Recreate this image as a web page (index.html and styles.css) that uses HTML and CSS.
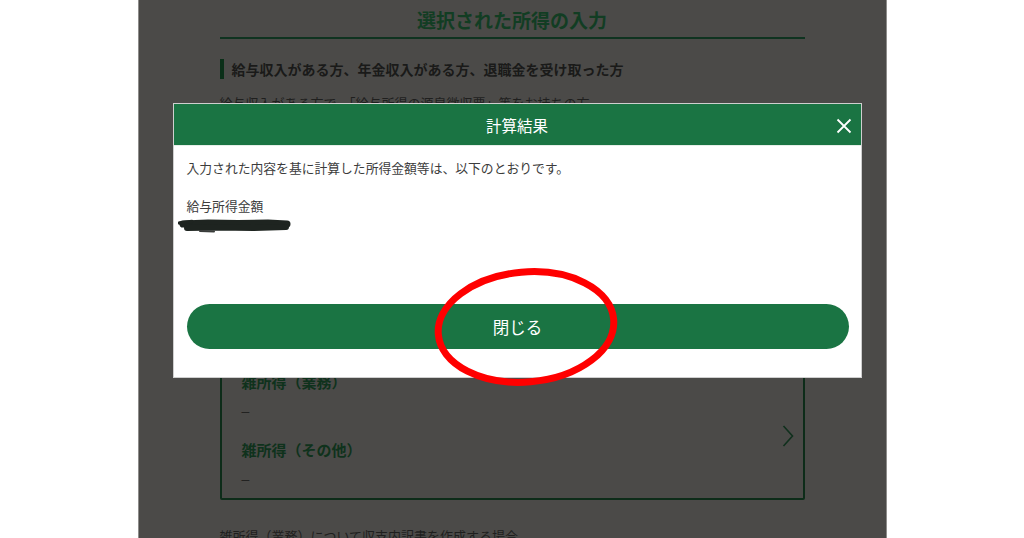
FILE: index.html
```html
<!DOCTYPE html>
<html lang="ja">
<head>
<meta charset="utf-8">
<title>計算結果</title>
<link rel="stylesheet" href="styles.css">
</head>
<body>
<div class="panel">
  <main class="page">
    <h1 class="page-title">選択された所得の入力</h1>
    <h2 class="section-head">給与収入がある方、年金収入がある方、退職金を受け取った方</h2>
    <p class="para">給与収入がある方で、「給与所得の源泉徴収票」等をお持ちの方</p>
    <div class="card">
      <div class="items">
        <div class="item"><div class="label">給与所得</div><div class="dash">–</div></div>
        <div class="item"><div class="label">公的年金等に係る雑所得</div><div class="dash">–</div></div>
        <div class="item"><div class="label">退職所得</div><div class="dash">–</div></div>
      </div>
    </div>
    <div class="card card-link">
      <div class="items">
        <div class="item"><div class="label">雑所得（業務）</div><div class="dash">–</div></div>
        <div class="item"><div class="label">雑所得（その他）</div><div class="dash">–</div></div>
      </div>
      <svg class="chevron" width="12" height="24" viewBox="0 0 12 24"><path d="M1.5 2 L10.5 12 L1.5 22" fill="none" stroke="#10301d" stroke-width="1.6"/></svg>
    </div>
    <p class="para para-bottom">雑所得（業務）について収支内訳書を作成する場合</p>
  </main>

  <div class="modal">
    <div class="modal-head">
      <span class="modal-title">計算結果</span>
      <span class="modal-close" aria-label="閉じる">
        <svg width="16" height="16" viewBox="0 0 16 16"><path d="M1.5 1.5 L14.5 14.5 M14.5 1.5 L1.5 14.5" stroke="#ffffff" stroke-width="1.8" fill="none"/></svg>
      </span>
    </div>
    <div class="modal-body">
      <p class="modal-text">入力された内容を基に計算した所得金額等は、以下のとおりです。</p>
      <p class="modal-label">給与所得金額</p>
      <svg class="scribble" width="116" height="16" viewBox="0 0 116 16">
        <path d="M5 6 L30 5 L60 5.5 L90 5 L109 6" stroke="#1e2420" stroke-width="7" stroke-linecap="round" fill="none"/>
        <path d="M9 10 L40 9.5 L75 10 L108 9" stroke="#1e2420" stroke-width="6" stroke-linecap="round" fill="none"/>
        <path d="M1.5 5 L14 3.5" stroke="#1e2420" stroke-width="3.5" stroke-linecap="round" fill="none"/>
        <path d="M22 13 L36 13.5" stroke="#3a3d3b" stroke-width="2" stroke-linecap="round" fill="none"/>
      </svg>
      <button class="close-btn">閉じる</button>
    </div>
  </div>

  <svg class="annotation" width="190" height="124" viewBox="0 0 190 124">
    <ellipse cx="95" cy="62" rx="88" ry="55" transform="rotate(-5 95 62)" fill="none" stroke="#ff0000" stroke-width="7"/>
  </svg>
</div>
</body>
</html>
```

FILE: styles.css
```css
html, body {
  margin: 0;
  padding: 0;
  background: #ffffff;
  height: 538px;
  overflow: hidden;
}

body {
  font-family: "Noto Sans CJK JP", "Noto Sans", sans-serif;
}

.panel {
  position: relative;
  width: 747px;
  height: 538px;
  margin: 0 auto;
  background: #4b4a48;
  border-left: 1px solid #8e8d8b;
  border-right: 1px solid #8e8d8b;
  overflow: hidden;
}

.page {
  padding: 0 81px;
}

.page-title {
  margin: 0;
  padding: 6px 0 3px;
  font-size: 19px;
  line-height: 28px;
  font-weight: 700;
  text-align: center;
  color: #123d23;
  border-bottom: 2px solid #0f3320;
}

.section-head {
  margin: 20px 0 0;
  padding-left: 8px;
  border-left: 4px solid #0a2f18;
  font-size: 14px;
  line-height: 20px;
  font-weight: 700;
  color: #1a1a19;
}

.para {
  margin: 14px 0 0;
  font-size: 13px;
  line-height: 20px;
  color: #1f1f1e;
}

.card {
  display: flex;
  align-items: center;
  margin-top: 14px;
  padding: 10px 9px 10px 20px;
  border: 2px solid #0d2c19;
  border-radius: 2px;
}

.card-link {
  margin-top: 20px;
  padding: 11px 9px 8px 20px;
}

.items {
  flex: 1;
  display: flex;
  flex-direction: column;
  gap: 17px;
}

.item {
  display: flex;
  flex-direction: column;
  gap: 7px;
}

.label {
  font-size: 15px;
  line-height: 22px;
  font-weight: 700;
  color: #0f321c;
}

.dash {
  font-family: "Liberation Sans", sans-serif;
  font-size: 14px;
  line-height: 22px;
  color: #222221;
}

.chevron {
  margin-top: 10px;
}

.para-bottom {
  margin-top: 26px;
}

/* modal */
.modal {
  position: absolute;
  top: 104px;
  left: 35px;
  width: 687px;
  background: #ffffff;
  box-shadow: 0 0 0 1px #cfcfcf;
}

.modal-head {
  position: relative;
  height: 42px;
  display: flex;
  align-items: center;
  justify-content: center;
  background: #1a7443;
  border-bottom: 1px solid #e6efe9;
  box-sizing: border-box;
}

.modal-title {
  font-size: 15.5px;
  color: #ffffff;
}

.modal-close {
  position: absolute;
  right: 9px;
  top: 14px;
  width: 16px;
  height: 16px;
  display: flex;
}

.modal-body {
  display: flex;
  flex-direction: column;
  padding: 13px 12px 28px 13px;
}

.modal-text,
.modal-label {
  margin: 0;
  font-size: 12.8px;
  line-height: 18px;
  color: #3c3c3c;
}

.modal-label {
  margin-top: 20px;
}

.scribble {
  margin: 3px 0 0 -9px;
  display: block;
}

.close-btn {
  margin-top: 70px;
  height: 45px;
  border: none;
  border-radius: 23px;
  background: #1a7443;
  color: #ffffff;
  font-family: "Noto Sans CJK JP", "Noto Sans", sans-serif;
  font-size: 16.5px;
  padding: 0;
}

.annotation {
  position: absolute;
  left: 292px;
  top: 265px;
}
```
